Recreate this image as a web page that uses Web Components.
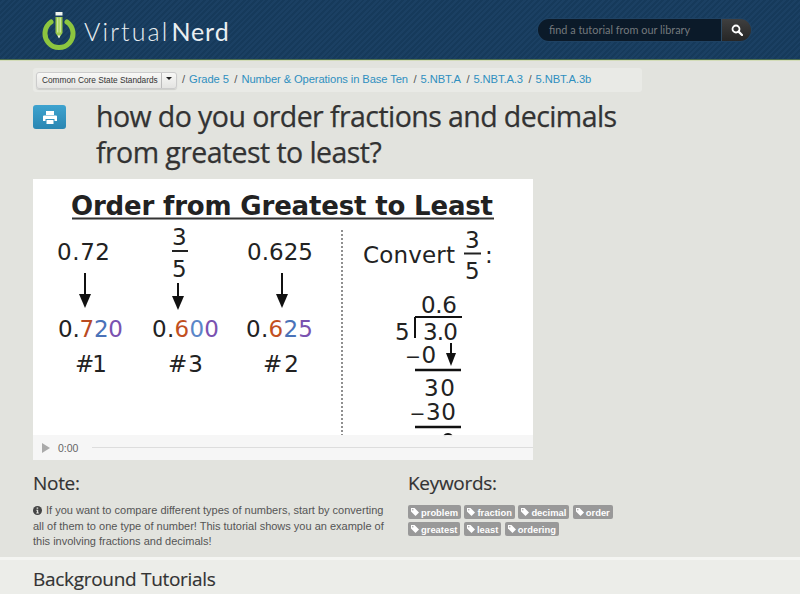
<!DOCTYPE html>
<html>
<head>
<meta charset="utf-8">
<title>Virtual Nerd</title>
<style>
  html, body { margin: 0; padding: 0; height: 594px; overflow: hidden; background: #e2e3de; font-family: "Liberation Sans", Arial, sans-serif; }
</style>
</head>
<body>
<site-header></site-header>
<crumb-bar>
  <crumb-link>Grade 5</crumb-link>
  <crumb-link>Number &amp; Operations in Base Ten</crumb-link>
  <crumb-link>5.NBT.A</crumb-link>
  <crumb-link>5.NBT.A.3</crumb-link>
  <crumb-link>5.NBT.A.3b</crumb-link>
</crumb-bar>
<title-row>how do you order fractions and decimals from greatest to least?</title-row>
<video-panel></video-panel>
<info-row>
  <note-box>If you want to compare different types of numbers, start by converting all of them to one type of number! This tutorial shows you an example of this involving fractions and decimals!</note-box>
  <keyword-box>
    <key-tag>problem</key-tag><key-tag>fraction</key-tag><key-tag>decimal</key-tag><key-tag>order</key-tag>
    <key-tag>greatest</key-tag><key-tag>least</key-tag><key-tag>ordering</key-tag>
  </keyword-box>
</info-row>
<tutorial-band>Background Tutorials</tutorial-band>

<script>
class SiteHeader extends HTMLElement {
  constructor() {
    super()
    this.attachShadow({mode: "open"})
    this.shadowRoot.innerHTML = `
      <style>
        :host {
          display: flex; align-items: center; justify-content: space-between;
          height: 60px; box-sizing: border-box; padding: 0 49px 0 42px;
          background: repeating-linear-gradient(135deg, #163a5b 0 2px, #1b4063 2px 4px);
          border-bottom: 1px solid #4d6d4f;
          box-shadow: 0 1px 0 #d3dcb8;
        }
        .logo { display: flex; align-items: center; gap: 8px; }
        svg.mark { margin-top: 3px; }
        .word { font: 300 25px "Lato", sans-serif; letter-spacing: 2.100px; color: #e9eef1; white-space: nowrap; margin-top: 2px; }
        .word b { font-weight: 400; letter-spacing: .9px; margin-left: 2px; }
        .search { display: flex; width: 213px; height: 22px; border-radius: 11px; overflow: hidden; box-shadow: 0 0 0 1px #1f4263; margin-top: 1px; }
        .search span { flex: 1; background: #0b1a29; color: #74797d; font: 10.900px "Lato", sans-serif; line-height: 22px; padding-left: 11px; }
        .search i { width: 29px; background: linear-gradient(#3f3f3f, #262626); border-left: 1px solid #2d4a63; display: flex; align-items: center; justify-content: center; }
      </style>
      <div class="logo">
        <svg class="mark" width="34" height="38" viewBox="0 0 34 38">
          <path d="M9 10A14 14 0 1 0 25 10" fill="none" stroke="#8dc63f" stroke-width="5" stroke-linecap="round"/>
          <rect x="13.500" y="0" width="7" height="3.500" fill="#f2f5f0"/>
          <path d="M13.500 5h7v16l-3.500 5-3.500-5z" fill="#9ccb4d"/>
          <path d="M15.800 5.500v15M18.200 5.500v15" stroke="#e4f0cd" stroke-width=".9"/>
          <path d="M15.500 23.500h3L17 26.500z" fill="#eef2ee"/>
        </svg>
        <span class="word">Virtual<b>Nerd</b></span>
      </div>
      <div class="search">
        <span>find a tutorial from our library</span>
        <i><svg width="12" height="12" viewBox="0 0 12 12"><circle cx="5" cy="5" r="3.500" fill="none" stroke="#fff" stroke-width="1.800"/><path d="M7.600 7.600L11 11" stroke="#fff" stroke-width="2.200" stroke-linecap="round"/></svg></i>
      </div>`
  }
}

class CrumbBar extends HTMLElement {
  constructor() {
    super()
    this.attachShadow({mode: "open"})
    this.shadowRoot.innerHTML = `
      <style>
        :host {
          display: flex; align-items: center; width: 609px; height: 24px; box-sizing: border-box;
          margin: 8px 0 0 33px; padding: 0 3px; background: #e9eae6; border-radius: 3px;
          font: 11.200px "Liberation Sans", sans-serif; color: #555;
        }
        .sel { display: flex; width: 141px; height: 17px; box-sizing: border-box; margin-right: 5px; border: 1px solid #ccc; border-radius: 3px; background: linear-gradient(#f8f8f6, #e4e4e2); color: #333; box-shadow: 0 1px 1px rgba(0,0,0,.12); }
        .sel span { flex: 1; font-size: 8.300px; line-height: 15px; padding-left: 5px; white-space: nowrap; }
        .sel i { width: 14px; border-left: 1px solid #bbb; position: relative; }
        .sel i::after { content: ""; position: absolute; left: 4px; top: 4px; border: 3px solid transparent; border-top-color: #222; border-bottom: 0; }
      </style>
      <div class="sel"><span>Common Core State Standards</span><i></i></div>
      <slot></slot>`
  }
}

class CrumbLink extends HTMLElement {
  constructor() {
    super()
    this.attachShadow({mode: "open"})
    this.shadowRoot.innerHTML = `
      <style>
        :host { display: inline-block; white-space: nowrap; margin-bottom: 3px; }
        .sep { color: #555; margin: 0 4px 0 0; }
        a { color: #2f8fbf; letter-spacing: -.1px; margin-right: 5.500px; }
      </style>
      <span class="sep">/</span><a><slot></slot></a>`
  }
}

class TitleRow extends HTMLElement {
  constructor() {
    super()
    this.attachShadow({mode: "open"})
    this.shadowRoot.innerHTML = `
      <style>
        :host { display: flex; margin: 13px 0 0 33px; height: 74px; }
        .btn { width: 33px; height: 24px; border-radius: 3px; background: linear-gradient(#3ea3cf, #2a86b2); display: flex; align-items: center; justify-content: center; flex: none; }
        h1 { margin: -7px 0 0 30px; width: 540px; font: 400 28.500px/36px "Open Sans", sans-serif; letter-spacing: -.57px; color: #333; -webkit-text-stroke: .25px #333; }
      </style>
      <div class="btn"><svg width="14" height="13" viewBox="0 0 14 13" fill="#fff">
        <path d="M3 0h8v4H3zM1 4.500h12a1 1 0 0 1 1 1V10h-2.500V8h-9v2H0V5.500a1 1 0 0 1 1-1zM3.500 9h7v4h-7z"/>
      </svg></div>
      <h1><slot></slot></h1>`
  }
}

class VideoPanel extends HTMLElement {
  constructor() {
    super()
    this.attachShadow({mode: "open"})
    this.shadowRoot.innerHTML = `
      <style>
        :host { display: block; position: relative; width: 500px; height: 281px; margin: 0 0 0 33px; background: #fff; }
        svg { display: block; }
        text { font-family: "DejaVu Sans", sans-serif; fill: #222; }
        .bar { position: absolute; left: 0; right: 0; bottom: 0; height: 25px; background: rgba(245,245,245,.9); display: flex; align-items: center; font: 10.500px "Liberation Sans", sans-serif; color: #666; }
        .bar i { width: 0; height: 0; margin: 0 8px 0 9px; border-left: 8px solid #aaa; border-top: 5px solid transparent; border-bottom: 5px solid transparent; }
        .bar u { flex: 1; height: 1px; margin: 0 0 0 14px; background: #ddd; }
      </style>
      <svg width="500" height="281" viewBox="0 0 500 281">
        <defs>
          <path id="head" d="M-6 0h12L0 14z" fill="#111"/>
        </defs>
        <text x="38" y="36" font-size="26" font-weight="bold" textLength="422">Order from Greatest to Least</text>
        <path d="M39 39.500H461" stroke="#333" stroke-width="2"/>
        <text x="24" y="81" font-size="23" textLength="53">0.72</text>
        <text x="139" y="66" font-size="23">3</text><path d="M139 72h16" stroke="#222" stroke-width="2"/>
        <text x="139" y="98" font-size="23">5</text>
        <text x="214" y="81" font-size="23" textLength="66">0.625</text>
        <path d="M52 94v24M145 104v16M249 94v24" stroke="#111" stroke-width="2"/>
        <use href="#head" x="52" y="115"/><use href="#head" x="145" y="117"/><use href="#head" x="249" y="115"/>
        <text x="25" y="158" font-size="23" textLength="65">0.<tspan fill="#b94a1f">7</tspan><tspan fill="#4a72b8">2</tspan><tspan fill="#7a52b0">0</tspan></text>
        <text x="119" y="158" font-size="23" textLength="67">0.<tspan fill="#c2501f">6</tspan><tspan fill="#5a86c8">0</tspan><tspan fill="#7a52b0">0</tspan></text>
        <text x="213" y="158" font-size="23" textLength="67">0.<tspan fill="#c2501f">6</tspan><tspan fill="#4a72b8">2</tspan><tspan fill="#7a52b0">5</tspan></text>
        <text x="42" y="193" font-size="23" textLength="32">#1</text>
        <text x="135" y="193" font-size="23" textLength="35">#3</text>
        <text x="230" y="193" font-size="23" textLength="36">#2</text>
        <path d="M309 51V256" stroke="#555" stroke-width="1.300" stroke-dasharray="2 2"/>
        <text x="330" y="84" font-size="23" textLength="92">Convert</text>
        <text x="432" y="69" font-size="23">3</text><path d="M431 74.500h17" stroke="#222" stroke-width="2"/>
        <text x="432" y="100" font-size="23">5</text>
        <text x="452" y="84" font-size="23">:</text>
        <text x="388" y="134" font-size="23" textLength="36">0.6</text>
        <path d="M382 138h47M382 138v21" stroke="#111" stroke-width="2" fill="none"/>
        <text x="362" y="161" font-size="23">5</text>
        <text x="390" y="161" font-size="23" textLength="35">3.0</text>
        <text x="372" y="184" font-size="19">−</text>
        <text x="388.500" y="184" font-size="23">0</text>
        <path d="M418 164v12" stroke="#111" stroke-width="2"/><path d="M413 174h10l-5 13z" fill="#111"/>
        <path d="M382 191h46" stroke="#111" stroke-width="2.500"/>
        <text x="391" y="217" font-size="23" textLength="31">3 0</text>
        <text x="376.500" y="241" font-size="19">−</text>
        <text x="393" y="241" font-size="23" textLength="30">30</text>
        <path d="M382 248h46" stroke="#111" stroke-width="2.500"/>
        <path d="M411 257q4-4 8 0" stroke="#111" stroke-width="2" fill="none"/>
      </svg>
      <div class="bar"><i></i><span>0:00</span><u></u></div>`
  }
}

class InfoRow extends HTMLElement {
  constructor() {
    super()
    this.attachShadow({mode: "open"})
    this.shadowRoot.innerHTML = `
      <style>
        :host { display: flex; gap: 20px; height: 97px; margin-left: 33px; }
      </style>
      <slot></slot>`
  }
}

const sectionHead = `h2 { margin: 10px 0 7px; font: 400 19px/26px "Open Sans", sans-serif; letter-spacing: -.3px; color: #333; -webkit-text-stroke: .15px #333; }`

class NoteBox extends HTMLElement {
  constructor() {
    super()
    this.attachShadow({mode: "open"})
    this.shadowRoot.innerHTML = `
      <style>
        :host { display: block; width: 355px; flex: none; }
        ${sectionHead}
        p { margin: 0; font: 11px/15.500px "Liberation Sans", sans-serif; color: #555; }
        svg { vertical-align: -1px; margin-right: 1px; }
      </style>
      <h2>Note:</h2>
      <p><svg width="9" height="9" viewBox="0 0 9 9"><circle cx="4.500" cy="4.500" r="4.500" fill="#444"/><path d="M3.600 1.500h1.600v1.300H3.600zM3.300 3.700h1.900v2.900h.6v1H3.300v-1h.6V4.700h-.6z" fill="#e2e3de"/></svg>
      <slot></slot></p>`
  }
}

class KeywordBox extends HTMLElement {
  constructor() {
    super()
    this.attachShadow({mode: "open"})
    this.shadowRoot.innerHTML = `
      <style>
        :host { display: block; flex: none; width: 220px; }
        ${sectionHead}
        h2 { margin-bottom: 9px; }
        .tags { display: flex; flex-wrap: wrap; gap: 3px 3.500px; }
      </style>
      <h2>Keywords:</h2>
      <div class="tags"><slot></slot></div>`
  }
}

class KeyTag extends HTMLElement {
  constructor() {
    super()
    this.attachShadow({mode: "open"})
    this.shadowRoot.innerHTML = `
      <style>
        :host { display: inline-flex; align-items: center; gap: 2px; height: 14px; padding: 0 3px; background: #999; border-radius: 2px; color: #fff; font: bold 9.400px "Liberation Sans", sans-serif; }
      </style>
      <svg width="8" height="8" viewBox="0 0 8 8"><path d="M0 0h3.500L8 4.500 4.500 8 0 3.500z" fill="#fff"/><circle cx="1.800" cy="1.800" r=".7" fill="#999"/></svg>
      <slot></slot>`
  }
}

class TutorialBand extends HTMLElement {
  constructor() {
    super()
    this.attachShadow({mode: "open"})
    this.shadowRoot.innerHTML = `
      <style>
        :host { display: block; height: 40px; padding: 6px 0 0 33px; box-sizing: border-box; background: #ecede9; border-top: 3px solid #f4f5f2; font: 400 19px/26px "Open Sans", sans-serif; letter-spacing: -.3px; color: #333; -webkit-text-stroke: .15px #333; }
      </style>
      <slot></slot>`
  }
}

customElements.define("site-header", SiteHeader)
customElements.define("crumb-bar", CrumbBar)
customElements.define("crumb-link", CrumbLink)
customElements.define("title-row", TitleRow)
customElements.define("video-panel", VideoPanel)
customElements.define("info-row", InfoRow)
customElements.define("note-box", NoteBox)
customElements.define("keyword-box", KeywordBox)
customElements.define("key-tag", KeyTag)
customElements.define("tutorial-band", TutorialBand)
</script>
</body>
</html>
